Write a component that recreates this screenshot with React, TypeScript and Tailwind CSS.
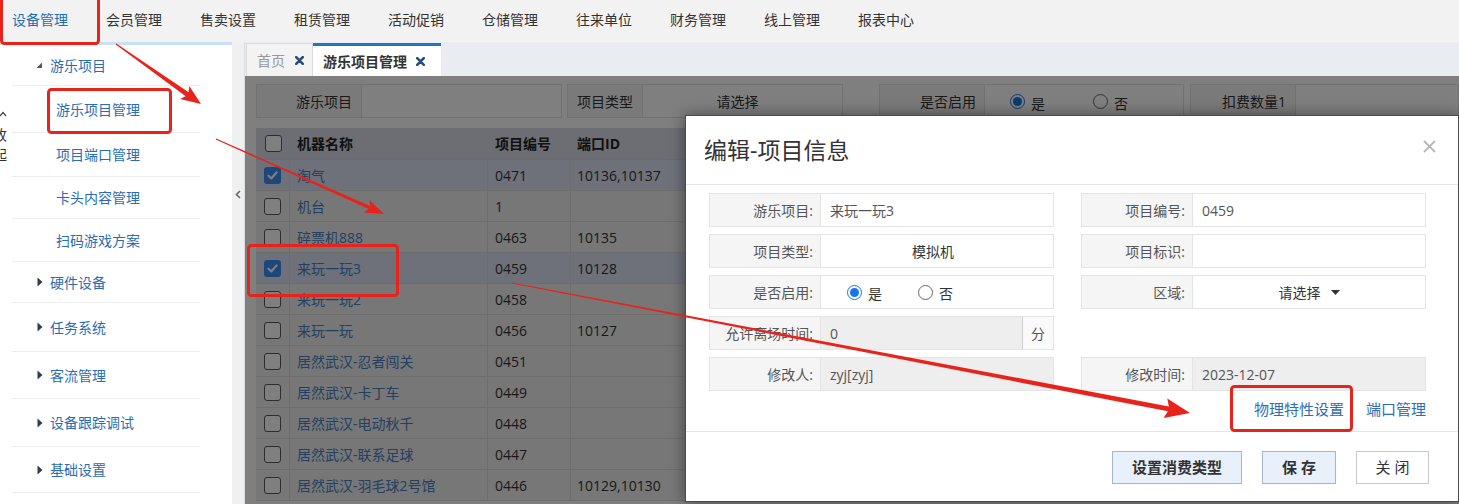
import React from 'react';

const navItems = ['设备管理', '会员管理', '售卖设置', '租赁管理', '活动促销', '仓储管理', '往来单位', '财务管理', '线上管理', '报表中心'];

type Row = { name: string; no: string; port: string; checked?: boolean };

const rows: Row[] = [
  { name: '淘气', no: '0471', port: '10136,10137', checked: true },
  { name: '机台', no: '1', port: '' },
  { name: '碎票机888', no: '0463', port: '10135' },
  { name: '来玩一玩3', no: '0459', port: '10128', checked: true },
  { name: '来玩一玩2', no: '0458', port: '' },
  { name: '来玩一玩', no: '0456', port: '10127' },
  { name: '居然武汉-忍者闯关', no: '0451', port: '' },
  { name: '居然武汉-卡丁车', no: '0449', port: '' },
  { name: '居然武汉-电动秋千', no: '0448', port: '' },
  { name: '居然武汉-联系足球', no: '0447', port: '' },
  { name: '居然武汉-羽毛球2号馆', no: '0446', port: '10129,10130' },
];

const menu = [
  { label: '游乐项目', h: 'h-[41px]', kind: 'open' },
  { label: '游乐项目管理', h: 'h-[47px]', kind: 'sub' },
  { label: '项目端口管理', h: 'h-[44px]', kind: 'sub' },
  { label: '卡头内容管理', h: 'h-[42px]', kind: 'sub' },
  { label: '扫码游戏方案', h: 'h-[43px]', kind: 'sub' },
  { label: '硬件设备', h: 'h-[41px]', kind: 'closed' },
  { label: '任务系统', h: 'h-[49px]', kind: 'closed' },
  { label: '客流管理', h: 'h-[47px]', kind: 'closed' },
  { label: '设备跟踪调试', h: 'h-[48px]', kind: 'closed' },
  { label: '基础设置', h: 'h-[46px]', kind: 'closed' },
];

// tapered arrow like the screenshot annotation tool draws
function arrowPts(x1: number, y1: number, x2: number, y2: number, w0: number, w1: number, hl: number, hw: number) {
  const dx = x2 - x1;
  const dy = y2 - y1;
  const L = Math.hypot(dx, dy);
  const ux = dx / L;
  const uy = dy / L;
  const nx = -uy;
  const ny = ux;
  const bx = x2 - ux * hl;
  const by = y2 - uy * hl;
  const wx = bx - ux * 3;
  const wy = by - uy * 3;
  const p = [
    [x1 + (nx * w0) / 2, y1 + (ny * w0) / 2],
    [bx + (nx * w1) / 2, by + (ny * w1) / 2],
    [wx + nx * hw, wy + ny * hw],
    [x2, y2],
    [wx - nx * hw, wy - ny * hw],
    [bx - (nx * w1) / 2, by - (ny * w1) / 2],
    [x1 - (nx * w0) / 2, y1 - (ny * w0) / 2],
  ];
  return p.map((q) => q.map((v) => v.toFixed(1)).join(',')).join(' ');
}

function TabX() {
  return (
    <svg width="9" height="9" viewBox="0 0 9 9" className="shrink-0">
      <path d="M1.2 1.2 L7.8 7.8 M7.8 1.2 L1.2 7.8" stroke="#2b4d72" strokeWidth="2.6" strokeLinecap="round" />
    </svg>
  );
}

function CheckBox({ checked }: { checked?: boolean }) {
  if (checked) {
    return (
      <span className="w-[17px] h-[17px] shrink-0 rounded-[3px] bg-[#3b8ff0] flex items-center justify-center">
        <svg width="13" height="13" viewBox="0 0 13 13">
          <path d="M2.5 6.8 L5.3 9.5 L10.6 3.4" fill="none" stroke="#fff" strokeWidth="2.2" strokeLinecap="round" strokeLinejoin="round" />
        </svg>
      </span>
    );
  }
  return <span className="block w-[17px] h-[17px] shrink-0 rounded-[3px] border border-[#5a5a5a] bg-white" />;
}

function Radio({ checked }: { checked?: boolean }) {
  if (checked) {
    return (
      <span className="w-[15px] h-[15px] shrink-0 rounded-full border border-[#1a73e8] bg-white flex items-center justify-center">
        <span className="block w-[9px] h-[9px] rounded-full bg-[#1a73e8]" />
      </span>
    );
  }
  return <span className="block w-[15px] h-[15px] shrink-0 rounded-full border border-[#666] bg-white" />;
}

function Field({ label, children, className = '' }: { label: string; children?: React.ReactNode; className?: string }) {
  return (
    <div className="flex h-[34px] text-[14px]">
      <div className="w-[112px] shrink-0 bg-[#f5f5f5] border border-[#e4e4e4] flex items-center justify-end pr-[7px] text-[#555]">
        {label}
      </div>
      <div className={`flex-1 border border-l-0 border-[#e4e4e4] flex items-center text-[#555] ${className}`}>{children}</div>
    </div>
  );
}

function Sidebar() {
  return (
    <div className="relative w-[232px] shrink-0 bg-white border-t-[3px] border-[#c9e1f5]">
      {/* collapse handle, mostly cut off at the left edge */}
      <div className="absolute left-[-7px] top-[66px] flex flex-col items-center text-[14px] leading-[20px] text-[#333]">
        <svg width="8" height="6" viewBox="0 0 8 6" className="ml-[6px] mb-[8px]">
          <path d="M1 5 L4 1.5 L7 5" fill="none" stroke="#444" strokeWidth="1.2" />
        </svg>
        <span>收</span>
        <span>起</span>
      </div>
      <div className="ml-3 w-[188px]">
        {menu.map((m) => (
          <div key={m.label} className={`${m.h} flex items-center border-b border-[#eeeeee] text-[14px] text-[#2a6cb3]`}>
            {m.kind === 'sub' && <span className="pl-[44px]">{m.label}</span>}
            {m.kind === 'open' && (
              <>
                <svg width="7" height="7" viewBox="0 0 7 7" className="ml-[24px] mr-[7px]">
                  <path d="M6 0.5 L6 6 L0.5 6 Z" fill="#555" />
                </svg>
                <span>{m.label}</span>
              </>
            )}
            {m.kind === 'closed' && (
              <>
                <svg width="6" height="10" viewBox="0 0 6 10" className="ml-[25px] mr-[7px]">
                  <path d="M0.5 0.5 L5.5 5 L0.5 9.5 Z" fill="#2f3d4c" />
                </svg>
                <span>{m.label}</span>
              </>
            )}
          </div>
        ))}
      </div>
    </div>
  );
}

function Modal() {
  return (
    <div className="absolute left-[440px] top-[39px] w-[774px] h-[387px] bg-white border border-[#4a4a4a] shadow-[0_0_14px_rgba(0,0,0,0.45)] z-20">
      <div className="h-[69px] border-b border-[#e5e5e5] flex items-center justify-between pl-[18px] pr-[22px]">
        <span className="text-[23px] leading-none text-[#333]">编辑-项目信息</span>
        <svg width="13" height="13" viewBox="0 0 13 13" className="mt-[-8px]">
          <path d="M1 1 L12 12 M12 1 L1 12" stroke="#b8b8b8" strokeWidth="1.8" />
        </svg>
      </div>

      <div className="h-[246px] pt-[8px]">
        <div className="grid grid-cols-[345px_345px] gap-x-[27px] gap-y-[7px] pl-[23px]">
          <Field label="游乐项目:">
            <span className="pl-[9px]">来玩一玩3</span>
          </Field>
          <Field label="项目编号:">
            <span className="pl-[9px]">0459</span>
          </Field>

          <Field label="项目类型:" className="justify-center">
            <span className="text-[#333] mr-[8px]">模拟机</span>
          </Field>
          <Field label="项目标识:" />

          <Field label="是否启用:">
            <div className="flex items-center pl-[26px]">
              <Radio checked />
              <span className="ml-[6px] mt-[3px] text-[#333]">是</span>
              <span className="ml-[36px]">
                <Radio />
              </span>
              <span className="ml-[6px] mt-[3px] text-[#333]">否</span>
            </div>
          </Field>
          <Field label="区域:" className="justify-center">
            <span className="text-[#333]">请选择</span>
            <svg width="9" height="5" viewBox="0 0 9 5" className="ml-[10px]">
              <path d="M0 0 L9 0 L4.5 5 Z" fill="#333" />
            </svg>
          </Field>

          <Field label="允许离场时间:" className="bg-[#eeeeee]">
            <span className="pl-[9px] flex-1">0</span>
            <span className="w-[31px] h-full bg-[#fafafa] border-l border-[#cfcfcf] flex items-center justify-center text-[#555]">分</span>
          </Field>
          <div />

          <Field label="修改人:" className="bg-[#eeeeee]">
            <span className="pl-[9px]">zyj[zyj]</span>
          </Field>
          <Field label="修改时间:" className="bg-[#eeeeee]">
            <span className="pl-[9px]">2023-12-07</span>
          </Field>
        </div>

        <div className="flex justify-end gap-[22px] pr-[32px] mt-[8px] text-[15px] leading-[20px] text-[#2f6db5]">
          <span>物理特性设置</span>
          <span>端口管理</span>
        </div>
      </div>

      <div className="h-[70px] border-t border-[#e5e5e5] flex justify-end gap-[20px] pr-[29px] pt-[19px]">
        <button className="w-[130px] h-[33px] bg-[#e8f0fb] border border-[#a6b5cc] text-[15px] font-bold text-[#333]">设置消费类型</button>
        <button className="w-[74px] h-[33px] bg-[#e8f0fb] border border-[#a6b5cc] text-[15px] font-bold text-[#333]">保 存</button>
        <button className="w-[73px] h-[33px] bg-white border border-[#c8c8c8] text-[15px] text-[#333]">关 闭</button>
      </div>
    </div>
  );
}

function Content() {
  return (
    <div className="relative flex-1 bg-white overflow-hidden pl-[11px] pt-[8px]">
      {/* filter bar */}
      <div className="flex h-[34px] text-[14px] text-[#333]">
        <div className="w-[106px] bg-[#f5f5f5] border border-[#e3e3e3] flex items-center justify-end pr-[9px]">游乐项目</div>
        <div className="w-[200px] border border-l-0 border-[#e3e3e3] bg-white" />
        <div className="w-[76px] ml-[5px] bg-[#f5f5f5] border border-[#e3e3e3] flex items-center justify-center">项目类型</div>
        <div className="w-[200px] border border-l-0 border-[#e3e3e3] flex items-center justify-center pr-[10px]">请选择</div>
        <div className="w-[106px] ml-[36px] bg-[#f5f5f5] border border-[#e3e3e3] flex items-center justify-end pr-[8px]">是否启用</div>
        <div className="w-[199px] border border-l-0 border-[#e3e3e3] flex items-center pl-[25px]">
          <Radio checked />
          <span className="ml-[6px] mt-[4px]">是</span>
          <span className="ml-[48px]">
            <Radio />
          </span>
          <span className="ml-[6px] mt-[4px]">否</span>
        </div>
        <div className="w-[106px] ml-[6px] bg-[#f5f5f5] border border-[#e3e3e3] flex items-center justify-end pr-[9px]">扣费数量1</div>
        <div className="flex-1 border border-l-0 border-[#e3e3e3]" />
      </div>

      {/* table */}
      <div className="mt-[10px] w-[1192px] text-[14px]">
        <div className="flex h-[32px] bg-[#d9dde8] border-b border-[#d4d4d4] font-bold text-[#222]">
          <div className="w-[34px] flex items-center justify-center">
            <CheckBox />
          </div>
          <div className="w-[198px] flex items-center pl-[7px]">机器名称</div>
          <div className="w-[83px] flex items-center pl-[7px]">项目编号</div>
          <div className="w-[140px] flex items-center pl-[6px]">端口ID</div>
          <div className="flex-1" />
        </div>
        {rows.map((r) => (
          <div key={r.name} className={`flex h-[31px] border-b border-[#dadada] ${r.checked ? 'bg-[#dde2f4]' : 'bg-[#eeeeee]'}`}>
            <div className="w-[34px] flex items-center justify-center border-r border-[#dadada]">
              <CheckBox checked={r.checked} />
            </div>
            <div className="w-[198px] flex items-center pl-[7px] border-r border-[#dadada] text-[#4a7fc0]">{r.name}</div>
            <div className="w-[83px] flex items-center pl-[7px] border-r border-[#dadada] text-[#333]">{r.no}</div>
            <div className="w-[140px] flex items-center pl-[6px] border-r border-[#dadada] text-[#333]">{r.port}</div>
            <div className="flex-1" />
          </div>
        ))}
      </div>

      {/* dialog backdrop */}
      <div className="absolute inset-0 bg-black/50 z-10" />
      <Modal />
    </div>
  );
}

export default function App() {
  return (
    <div className="relative w-[1459px] h-[504px] overflow-hidden bg-white font-['Open_Sans','Noto_Sans_CJK_SC',sans-serif]">
      {/* top menu */}
      <div className="h-[42px] bg-[#f2f2f2] flex items-center pl-3 pb-[4px] gap-[38px] text-[14px] text-[#333]">
        {navItems.map((n, i) => (
          <span key={n} className={i === 0 ? 'text-[#1f6fb5]' : ''}>
            {n}
          </span>
        ))}
      </div>

      <div className="flex h-[462px]">
        <Sidebar />
        <div className="w-[13px] shrink-0 bg-[#eef0f2] border-r border-[#dcdcdc] flex justify-center pt-[148px]">
          <svg width="6" height="9" viewBox="0 0 6 9">
            <path d="M5 1 L1.5 4.5 L5 8" fill="none" stroke="#666" strokeWidth="1.6" />
          </svg>
        </div>

        <div className="flex-1 flex flex-col min-w-0">
          {/* tab strip */}
          <div className="h-[34px] bg-[#e9ecf0] flex items-end pl-[1px]">
            <div className="w-[67px] h-[33px] bg-[#f3f3f3] border border-b-0 border-[#dadada] flex items-center gap-[10px] pl-[10px] text-[14px] text-[#999]">
              <span>首页</span>
              <TabX />
            </div>
            <div className="w-[128px] h-[33px] bg-white border-t-[3px] border-[#1f77c4] flex items-center gap-[9px] pl-[10px] text-[14px] font-bold text-[#333]">
              <span>游乐项目管理</span>
              <TabX />
            </div>
          </div>
          <Content />
        </div>
      </div>

      {/* red annotations drawn on the screenshot */}
      <svg className="absolute inset-0 pointer-events-none z-50" width="1459" height="504" viewBox="0 0 1459 504">
        <g fill="none" stroke="#e8231b" strokeWidth="3">
          <rect x="1.5" y="-5" width="97" height="48.5" rx="3" />
          <rect x="48.5" y="89.5" width="122" height="43" rx="3" />
          <rect x="248.5" y="245.5" width="149" height="50" rx="3" />
          <rect x="1231.5" y="386.5" width="120" height="44" rx="3" />
        </g>
        <g fill="#e8231b">
          <polygon points={arrowPts(116, 44, 201, 104, 1, 5, 17, 8)} />
          <polygon points={arrowPts(216, 139, 384, 214, 0.8, 3.5, 16, 7)} />
          <polygon points={arrowPts(512, 283, 1190, 413, 0.8, 5, 22, 10)} />
        </g>
      </svg>
    </div>
  );
}
